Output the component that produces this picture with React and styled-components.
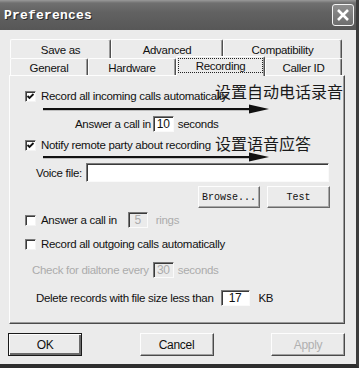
import React from "react";
import styled, { createGlobalStyle, css } from "styled-components";

const Global = createGlobalStyle`
  html, body { margin: 0; padding: 0; background: #3a3a3a; }
  body { width: 359px; height: 368px; overflow: hidden; }
  * { box-sizing: border-box; }
`;

const FACE = "#ebebeb";
const UI_FONT = `"Liberation Sans", Arial, sans-serif`;

const Window = styled.div`
  position: relative;
  width: 359px;
  height: 368px;
  background: ${FACE};
  border-right: 3px solid #3c3c3c;
  border-bottom: 4px solid #2e2e2e;
  display: flex;
  flex-direction: column;
  font-family: ${UI_FONT};
  font-size: 11.5px;
  letter-spacing: -0.3px;
  color: #111;
`;

const TitleBar = styled.div`
  height: 30px;
  flex: none;
  display: flex;
  align-items: center;
  justify-content: space-between;
  padding: 0 2px 0 4px;
  background: linear-gradient(#9a9a9a 0px, #707070 3px, #626262 40%, #575757 100%);
`;

const Title = styled.span`
  font-family: "Liberation Mono", "Courier New", monospace;
  font-weight: bold;
  font-size: 13px;
  letter-spacing: 0.2px;
  color: #fff;
  text-shadow: 1px 1px 0 #2a2a2a;
`;

const CloseBtn = styled.div`
  width: 22px;
  height: 22px;
  border: 1px solid #f4f4f4;
  border-radius: 3px;
  background: linear-gradient(#8e8e8e, #6e6e6e);
  display: flex;
  align-items: center;
  justify-content: center;
`;

const Body = styled.div`
  flex: 1;
  display: flex;
  flex-direction: column;
  padding: 9px 0 0 9px;
`;

const TabRow = styled.div`
  display: flex;
  margin-left: 1px;
  height: ${(p) => p.$h}px;
`;

const Tab = styled.div`
  width: ${(p) => p.$w}px;
  height: 100%;
  display: flex;
  align-items: center;
  justify-content: center;
  border-top: 1px solid #fdfdfd;
  border-left: 1px solid #fdfdfd;
  border-right: 1px solid #505050;
  box-shadow: inset -1px 0 #9a9a9a;
  border-top-left-radius: 2px;
  border-top-right-radius: 2px;
  background: ${FACE};
  padding-top: 1px;
  ${(p) =>
    p.$active &&
    css`
      position: relative;
      margin-top: -2px;
      height: calc(100% + 3px);
      margin-bottom: -1px;
      z-index: 1;
      padding: 1px 1px 3px 1px;
    `}
`;

const Focus = styled.span`
  display: flex;
  align-items: center;
  justify-content: center;
  width: 100%;
  height: 100%;
  border: 1px dotted #222;
`;

const Panel = styled.div`
  position: relative;
  width: 336px;
  height: 249px;
  border-top: 1px solid #fdfdfd;
  border-left: 1px solid #fdfdfd;
  border-right: 1px solid #4a4a4a;
  border-bottom: 1px solid #4a4a4a;
  box-shadow: inset -1px -1px #9a9a9a;
  display: flex;
  flex-direction: column;
  padding-left: 15px;
`;

const Row = styled.div`
  display: flex;
  align-items: center;
  height: ${(p) => p.$h || 16}px;
  margin-top: ${(p) => p.$mt}px;
  padding-left: ${(p) => p.$pl || 0}px;
  color: ${(p) => (p.$disabled ? "#acacac" : "#111")};
`;

const Box = styled.span`
  width: 11px;
  height: 11px;
  flex: none;
  background: #fff;
  border-top: 1px solid #7a7a7a;
  border-left: 1px solid #7a7a7a;
  border-right: 1px solid #f4f4f4;
  border-bottom: 1px solid #f4f4f4;
  box-shadow: inset 1px 1px #3a3a3a;
  margin-right: 5px;
  display: flex;
  align-items: center;
  justify-content: center;
`;

const Field = styled.span`
  width: ${(p) => p.$w}px;
  height: ${(p) => p.$h || 16}px;
  flex: none;
  display: flex;
  align-items: center;
  justify-content: center;
  background: ${(p) => (p.$disabled ? FACE : "#fff")};
  color: ${(p) => (p.$disabled ? "#acacac" : "#111")};
  border-top: 1px solid #7a7a7a;
  border-left: 1px solid #7a7a7a;
  border-right: 1px solid #fafafa;
  border-bottom: 1px solid #fafafa;
  box-shadow: inset 1px 1px #3a3a3a;
  margin: 0 ${(p) => p.$mr || 4}px 0 ${(p) => p.$ml || 2}px;
  font-size: 12px;
`;

const Gap = styled.span`
  width: ${(p) => p.$w}px;
  flex: none;
`;

const BtnRow = styled.div`
  display: flex;
  gap: 7px;
  margin-top: 4px;
  padding-left: 173px;
`;

const SmallBtn = styled.div`
  width: ${(p) => p.$w}px;
  height: 22px;
  display: flex;
  align-items: center;
  justify-content: center;
  font-family: "Liberation Mono", "Courier New", monospace;
  font-size: 10px;
  letter-spacing: 0;
  border-top: 1px solid #fdfdfd;
  border-left: 1px solid #fdfdfd;
  border-right: 1px solid #6a6a6a;
  border-bottom: 1px solid #6a6a6a;
  box-shadow: inset -1px -1px #a8a8a8;
`;

const Footer = styled.div`
  display: flex;
  margin-top: 9px;
  margin-left: -1px;
  width: 337px;
  justify-content: space-between;
`;

const DlgBtn = styled.div`
  width: 74px;
  height: 23px;
  display: flex;
  align-items: center;
  justify-content: center;
  font-size: 12px;
  letter-spacing: -0.3px;
  color: ${(p) => (p.$disabled ? "#b0b0b0" : "#111")};
  border-top: 1px solid #fdfdfd;
  border-left: 1px solid #fdfdfd;
  border-right: 1px solid #4a4a4a;
  border-bottom: 1px solid #4a4a4a;
  box-shadow: inset -1px -1px #a0a0a0;
  ${(p) =>
    p.$default &&
    css`
      border: 1px solid #1a1a1a;
      box-shadow: inset 1px 1px #fdfdfd, inset -2px -2px #6a6a6a;
    `}
`;

const Note = styled.div`
  position: absolute;
  left: 205px;
  top: ${(p) => p.$top}px;
  font-family: "Noto Sans CJK SC", sans-serif;
  font-size: 16px;
  line-height: 18px;
  letter-spacing: 0;
  color: #1a1a1a;
`;

const ArrowSvg = styled.svg`
  position: absolute;
  left: 33px;
  top: ${(p) => p.$top}px;
`;

const Check = () => (
  <svg width="9" height="9" viewBox="0 0 9 9">
    <path d="M1.5 4 L3.5 6 L7.5 2" stroke="#111" strokeWidth="1.8" fill="none" />
  </svg>
);

const Arrow = ({ top }) => (
  <ArrowSvg $top={top} width="240" height="10" viewBox="0 0 240 10">
    <rect x="0" y="4" width="212" height="2.2" fill="#111" />
    <polygon points="206,0.5 226,5 206,9.5" fill="#111" />
  </ArrowSvg>
);

export default function App() {
  return (
    <>
      <Global />
      <Window>
        <TitleBar>
          <Title>Preferences</Title>
          <CloseBtn>
            <svg width="16" height="16" viewBox="0 0 16 16">
              <path d="M3 3 L13 13 M13 3 L3 13" stroke="#fff" strokeWidth="2.6" />
            </svg>
          </CloseBtn>
        </TitleBar>
        <Body>
          <TabRow $h={19}>
            <Tab $w={101}>Save as</Tab>
            <Tab $w={112}>Advanced</Tab>
            <Tab $w={119}>Compatibility</Tab>
          </TabRow>
          <TabRow $h={17}>
            <Tab $w={78}>General</Tab>
            <Tab $w={88}>Hardware</Tab>
            <Tab $w={89} $active>
              <Focus>Recording</Focus>
            </Tab>
            <Tab $w={77}>Caller ID</Tab>
          </TabRow>
          <Panel>
            <Row $mt={12}>
              <Box>
                <Check />
              </Box>
              Record all incoming calls automatically
            </Row>
            <Row $mt={11} $h={17} $pl={50}>
              Answer a call in
              <Field $w={21}>10</Field>
              seconds
            </Row>
            <Row $mt={5}>
              <Box>
                <Check />
              </Box>
              Notify remote party about recording
            </Row>
            <Row $mt={10} $h={19} $pl={11}>
              Voice file:
              <Field $w={243} $h={19} $ml={4} />
            </Row>
            <BtnRow>
              <SmallBtn $w={62}>Browse...</SmallBtn>
              <SmallBtn $w={63}>Test</SmallBtn>
            </BtnRow>
            <Row $mt={4}>
              <Box />
              Answer a call in
              <Gap $w={9} />
              <Field $w={20} $disabled>5</Field>
              <Row as="span" $mt={0} $pl={4} $disabled>rings</Row>
            </Row>
            <Row $mt={8}>
              <Box />
              Record all outgoing calls automatically
            </Row>
            <Row $mt={10} $pl={7} $disabled>
              Check for dialtone every
              <Field $w={21} $ml={4} $disabled>30</Field>
              seconds
            </Row>
            <Row $mt={12} $pl={11}>
              Delete records with file size less than
              <Gap $w={5} />
              <Field $w={29} $mr={9}>17</Field>
              KB
            </Row>
            <Note $top={6}>设置自动电话录音</Note>
            <Arrow top={28} />
            <Note $top={58}>设置语音应答</Note>
            <Arrow top={76} />
          </Panel>
          <Footer>
            <DlgBtn $default>OK</DlgBtn>
            <DlgBtn>Cancel</DlgBtn>
            <DlgBtn $disabled>Apply</DlgBtn>
          </Footer>
        </Body>
      </Window>
    </>
  );
}
